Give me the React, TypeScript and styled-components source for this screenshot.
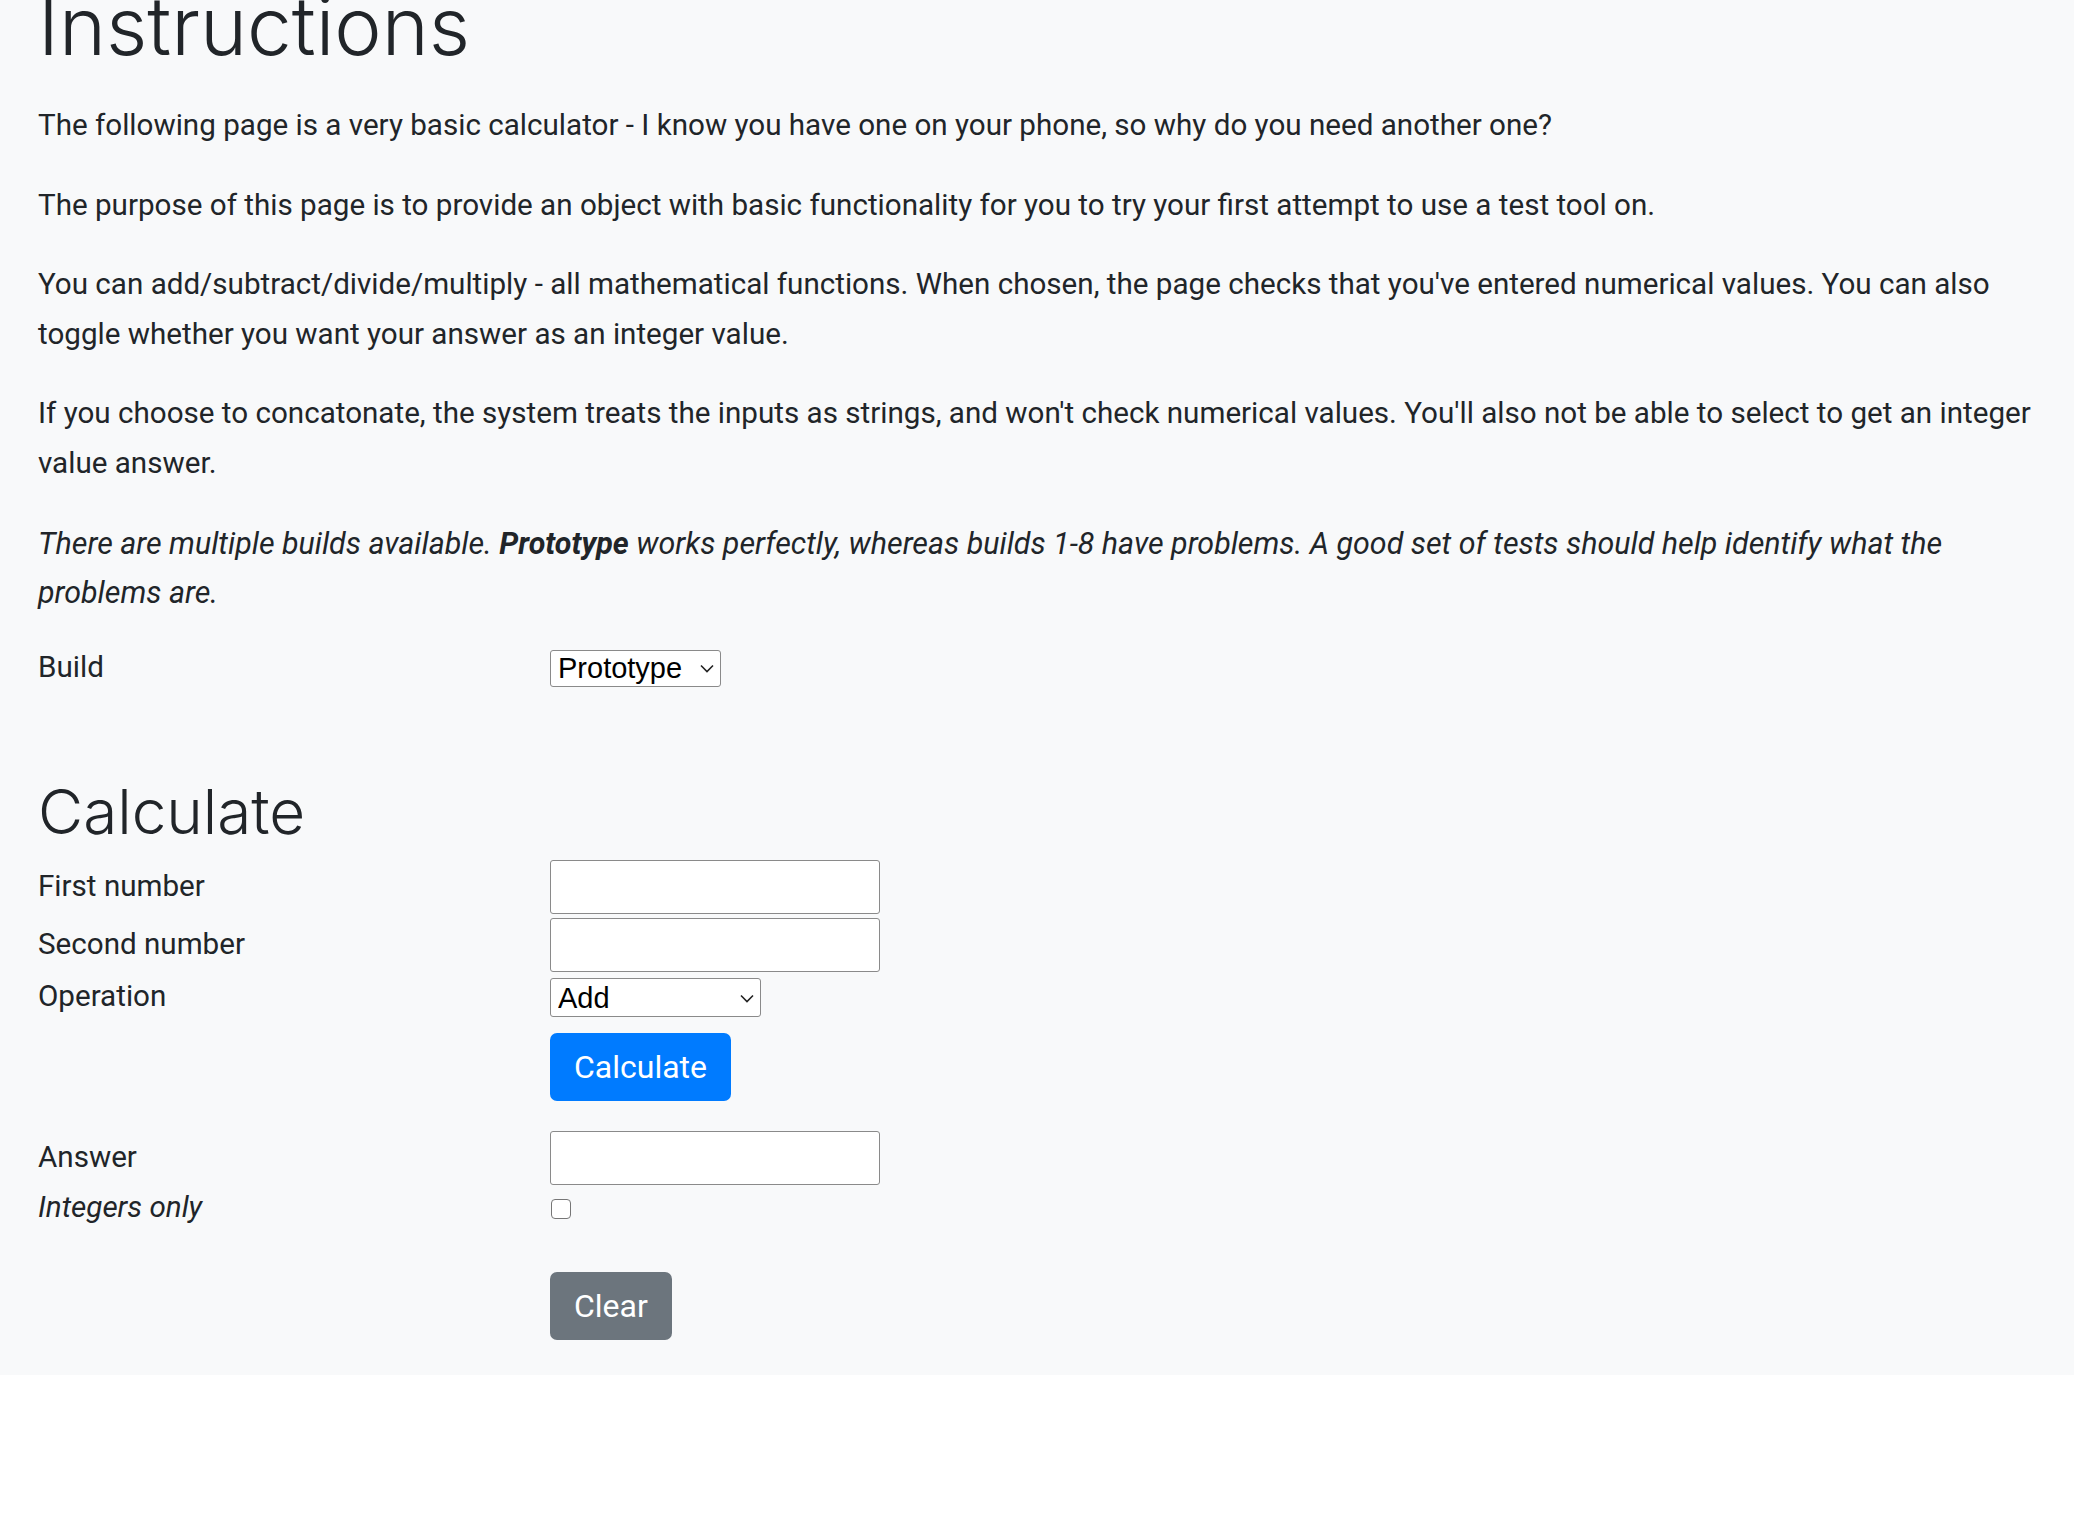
import React from "react";
import styled, { createGlobalStyle } from "styled-components";

const Global = createGlobalStyle`
  html, body { margin: 0; padding: 0; background: #ffffff; }
  body {
    font-family: Roboto, "Liberation Sans", sans-serif;
    color: #212529;
    -webkit-font-smoothing: antialiased;
  }
  * { box-sizing: border-box; }
`;

const Page = styled.main`
  background: #f8f9fa;
  padding: 0 20px 35px 38px;
  overflow: hidden;
`;

const Title = styled.h1<{ $size: number }>`
  font-family: Inter, "Open Sans", sans-serif;
  font-weight: 300;
  font-size: ${(p) => p.$size}px;
  line-height: 1.2;
  color: #212529;
  margin: 0;
`;

const MainTitle = styled(Title)`
  margin-top: -22px;
  margin-bottom: 27px;
`;

const SectionTitle = styled(Title)`
  margin-top: 88px;
  margin-bottom: 11px;
`;

const Para = styled.p`
  font-size: 29.6px;
  line-height: 49.6px;
  margin: 0 0 30px;
`;

const Note = styled(Para)`
  font-style: italic;
  font-size: 30.4px;
  margin-bottom: 32px;
`;

const Form = styled.div`
  display: flex;
  flex-direction: column;
`;

const Row = styled.div<{ $mb?: number }>`
  display: grid;
  grid-template-columns: 512px auto;
  align-items: center;
  margin-bottom: ${(p) => p.$mb ?? 0}px;
`;

const Label = styled.label<{ $italic?: boolean }>`
  font-size: 29.6px;
  line-height: 36px;
  font-style: ${(p) => (p.$italic ? "italic" : "normal")};
  margin-top: -3px;
`;

const Field = styled.div`
  display: flex;
  align-items: center;
`;

const TextInput = styled.input`
  width: 330px;
  height: 54px;
  background: #ffffff;
  border: 1.5px solid #8a8a8a;
  border-radius: 3px;
  font-size: 28px;
  padding: 0 8px;
  outline: none;
`;

const SelectWrap = styled.div<{ $w: number; $h: number }>`
  position: relative;
  width: ${(p) => p.$w}px;
  height: ${(p) => p.$h}px;
`;

const Select = styled.select`
  appearance: none;
  -webkit-appearance: none;
  width: 100%;
  height: 100%;
  background: #ffffff;
  border: 1.5px solid #8a8a8a;
  border-radius: 3px;
  font-family: "Liberation Sans", Arial, sans-serif;
  font-size: 29px;
  color: #000000;
  padding: 0 30px 0 7px;
  outline: none;
`;

const Chevron = styled.svg`
  position: absolute;
  right: 7px;
  top: 50%;
  width: 14px;
  height: 9px;
  margin-top: -4px;
  pointer-events: none;
`;

const Button = styled.button<{ $variant: "primary" | "secondary" }>`
  height: 68px;
  padding: 0 24px;
  border: none;
  border-radius: 7px;
  background: ${(p) => (p.$variant === "primary" ? "#007bff" : "#6c757d")};
  color: #ffffff;
  font-family: Roboto, "Liberation Sans", sans-serif;
  font-size: 32px;
  cursor: pointer;
`;

const Check = styled.input`
  appearance: none;
  -webkit-appearance: none;
  width: 20px;
  height: 20px;
  margin: 0 0 0 1px;
  background: #ffffff;
  border: 1.5px solid #767676;
  border-radius: 4px;
`;

const Dropdown: React.FC<{ w: number; h: number; options: string[] }> = ({ w, h, options }) => (
  <SelectWrap $w={w} $h={h}>
    <Select defaultValue={options[0]}>
      {options.map((o) => (
        <option key={o}>{o}</option>
      ))}
    </Select>
    <Chevron viewBox="0 0 14 9">
      <path d="M1 1.5 L7 7.5 L13 1.5" fill="none" stroke="#222" strokeWidth="1.6" />
    </Chevron>
  </SelectWrap>
);

export default function App() {
  return (
    <>
      <Global />
      <Page>
        <MainTitle $size={80}>Instructions</MainTitle>
        <Para>
          The following page is a very basic calculator - I know you have one on your phone, so why do you need
          another one?
        </Para>
        <Para>
          The purpose of this page is to provide an object with basic functionality for you to try your first attempt
          to use a test tool on.
        </Para>
        <Para>
          You can add/subtract/divide/multiply - all mathematical functions. When chosen, the page checks that you've
          entered numerical values. You can also toggle whether you want your answer as an integer value.
        </Para>
        <Para>
          If you choose to concatonate, the system treats the inputs as strings, and won't check numerical values.
          You'll also not be able to select to get an integer value answer.
        </Para>
        <Note>
          There are multiple builds available. <b>Prototype</b> works perfectly, whereas builds 1-8 have problems. A
          good set of tests should help identify what the problems are.
        </Note>
        <Form>
          <Row>
            <Label>Build</Label>
            <Field>
              <Dropdown
                w={171}
                h={37}
                options={["Prototype", "1", "2", "3", "4", "5", "6", "7", "8"]}
              />
            </Field>
          </Row>
        </Form>
        <SectionTitle $size={62}>Calculate</SectionTitle>
        <Form>
          <Row $mb={4}>
            <Label>First number</Label>
            <Field>
              <TextInput type="text" />
            </Field>
          </Row>
          <Row $mb={6}>
            <Label>Second number</Label>
            <Field>
              <TextInput type="text" />
            </Field>
          </Row>
          <Row $mb={16}>
            <Label>Operation</Label>
            <Field>
              <Dropdown w={211} h={39} options={["Add", "Subtract", "Multiply", "Divide", "Concatenate"]} />
            </Field>
          </Row>
          <Row $mb={30}>
            <span />
            <Field>
              <Button $variant="primary">Calculate</Button>
            </Field>
          </Row>
          <Row $mb={7}>
            <Label>Answer</Label>
            <Field>
              <TextInput type="text" />
            </Field>
          </Row>
          <Row $mb={47}>
            <Label $italic>Integers only</Label>
            <Field>
              <Check type="checkbox" />
            </Field>
          </Row>
          <Row>
            <span />
            <Field>
              <Button $variant="secondary">Clear</Button>
            </Field>
          </Row>
        </Form>
      </Page>
    </>
  );
}
